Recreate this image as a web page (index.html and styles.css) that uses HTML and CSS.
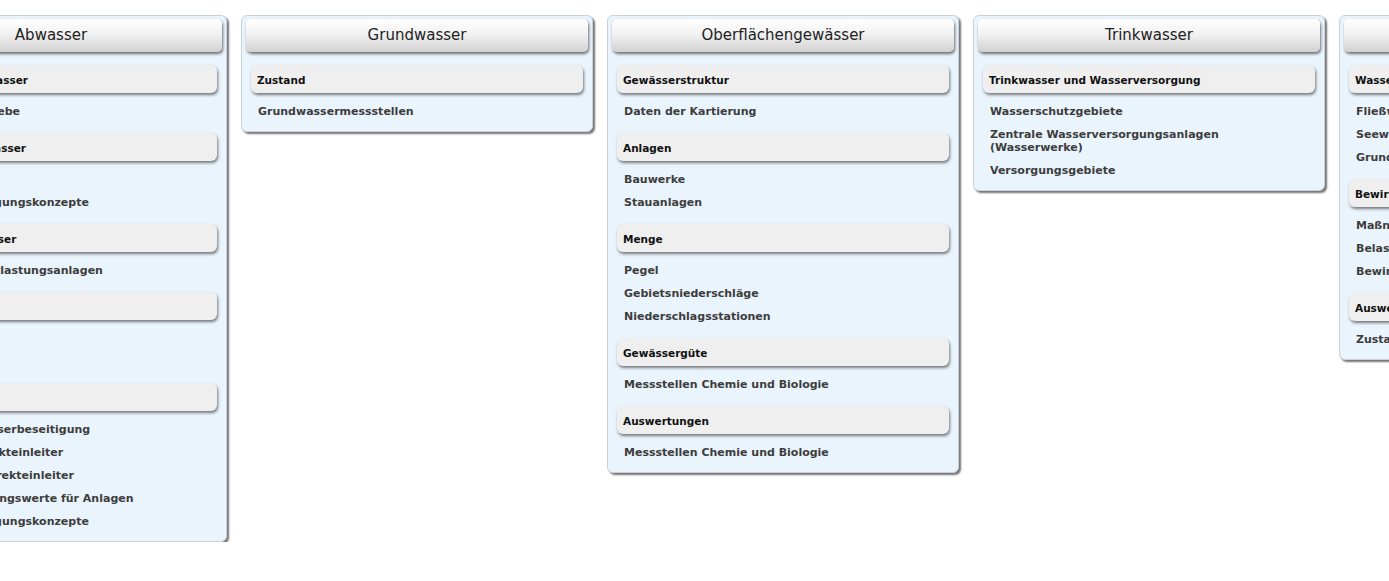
FILE: index.html
```html
<!DOCTYPE html>
<html lang="de">
<head>
  <meta charset="UTF-8">
  <title>Themen Wasser</title>
  <link rel="stylesheet" href="styles.css">
</head>
<body>
  <div class="themen">
    <div class="kachel">
      <div class="kachel-titel">Abwasser</div>
      <div class="gruppe">
        <div class="gruppe-titel">Kommunales Abwasser</div>
        <ul class="links">
          <li>Industrielle Betriebe</li>
        </ul>
      </div>
      <div class="gruppe">
        <div class="gruppe-titel">Industrielles Abwasser</div>
        <ul class="links">
          <li>Einleitstellen</li>
          <li>Abwasserbeseitigungskonzepte</li>
        </ul>
      </div>
      <div class="gruppe">
        <div class="gruppe-titel">Niederschlagswasser</div>
        <ul class="links">
          <li>Niederschlagsentlastungsanlagen</li>
        </ul>
      </div>
      <div class="gruppe">
        <div class="gruppe-titel">Anlagen</div>
        <ul class="links">
          <li>Kleinkläranlagen</li>
          <li>Kläranlagen</li>
        </ul>
      </div>
      <div class="gruppe">
        <div class="gruppe-titel">Auswertungen</div>
        <ul class="links">
          <li>Stand der Abwasserbeseitigung</li>
          <li>Gewerbliche Direkteinleiter</li>
          <li>Gewerbliche Indirekteinleiter</li>
          <li>Jahresüberwachungswerte für Anlagen</li>
          <li>Abwasserbeseitigungskonzepte</li>
        </ul>
      </div>
    </div>

    <div class="kachel">
      <div class="kachel-titel">Grundwasser</div>
      <div class="gruppe">
        <div class="gruppe-titel">Zustand</div>
        <ul class="links">
          <li>Grundwassermessstellen</li>
        </ul>
      </div>
    </div>

    <div class="kachel">
      <div class="kachel-titel">Oberflächengewässer</div>
      <div class="gruppe">
        <div class="gruppe-titel">Gewässerstruktur</div>
        <ul class="links">
          <li>Daten der Kartierung</li>
        </ul>
      </div>
      <div class="gruppe">
        <div class="gruppe-titel">Anlagen</div>
        <ul class="links">
          <li>Bauwerke</li>
          <li>Stauanlagen</li>
        </ul>
      </div>
      <div class="gruppe">
        <div class="gruppe-titel">Menge</div>
        <ul class="links">
          <li>Pegel</li>
          <li>Gebietsniederschläge</li>
          <li>Niederschlagsstationen</li>
        </ul>
      </div>
      <div class="gruppe">
        <div class="gruppe-titel">Gewässergüte</div>
        <ul class="links">
          <li>Messstellen Chemie und Biologie</li>
        </ul>
      </div>
      <div class="gruppe">
        <div class="gruppe-titel">Auswertungen</div>
        <ul class="links">
          <li>Messstellen Chemie und Biologie</li>
        </ul>
      </div>
    </div>

    <div class="kachel">
      <div class="kachel-titel">Trinkwasser</div>
      <div class="gruppe">
        <div class="gruppe-titel">Trinkwasser und Wasserversorgung</div>
        <ul class="links">
          <li>Wasserschutzgebiete</li>
          <li>Zentrale Wasserversorgungsanlagen (Wasserwerke)</li>
          <li>Versorgungsgebiete</li>
        </ul>
      </div>
    </div>

    <div class="kachel">
      <div class="kachel-titel">Wasserrahmenrichtlinie</div>
      <div class="gruppe">
        <div class="gruppe-titel">Wasserkörper</div>
        <ul class="links">
          <li>Fließwasserkörper</li>
          <li>Seewasserkörper</li>
          <li>Grundwasserkörper</li>
        </ul>
      </div>
      <div class="gruppe">
        <div class="gruppe-titel">Bewirtschaftungsplan</div>
        <ul class="links">
          <li>Maßnahmen</li>
          <li>Belastungen</li>
          <li>Bewirtschaftungsziele</li>
        </ul>
      </div>
      <div class="gruppe">
        <div class="gruppe-titel">Auswertungen</div>
        <ul class="links">
          <li>Zustand</li>
        </ul>
      </div>
    </div>
  </div>
</body>
</html>
```

FILE: styles.css
```css
body {
  margin: 0;
  background: #fff;
  font-family: 'DejaVu Sans', Verdana, sans-serif;
  overflow: hidden;
}
.themen {
  display: flex;
  align-items: flex-start;
  gap: 14px;
  padding-top: 15px;
  margin-left: -125px;
}
.kachel {
  flex: 0 0 352px;
  box-sizing: border-box;
  background: #eaf4fc;
  border: 1px solid #c9d2db;
  border-radius: 6px;
  box-shadow: 2px 2px 2px rgba(0,0,0,0.55);
  padding: 3px 0 8px 0;
}
.kachel-titel {
  margin: 0 4px 13px 4px;
  height: 33px;
  line-height: 33px;
  text-align: center;
  font-size: 15px;
  color: #222;
  white-space: nowrap;
  overflow: hidden;
  border-radius: 5px;
  background: linear-gradient(180deg, #ffffff 0%, #f2f2f2 45%, #d2d1d1 100%);
  box-shadow: 1px 2px 3px rgba(0,0,0,0.55);
}
.gruppe + .gruppe {
  margin-top: 10px;
}
.gruppe-titel {
  margin: 0 9px;
  padding: 8px 6px 6px 6px;
  line-height: 14px;
  font-size: 10.5px;
  font-weight: 700;
  color: #111;
  background: #efefef;
  border-radius: 6px;
  box-shadow: 1px 2px 3px rgba(0,0,0,0.5);
  white-space: nowrap;
}
.links {
  list-style: none;
  margin: 0;
  padding: 7px 20px 0 16px;
}
.links li {
  padding: 5px 0;
  line-height: 13px;
  font-size: 11px;
  font-weight: 700;
  color: #3d3d3d;
  cursor: pointer;
}
```
